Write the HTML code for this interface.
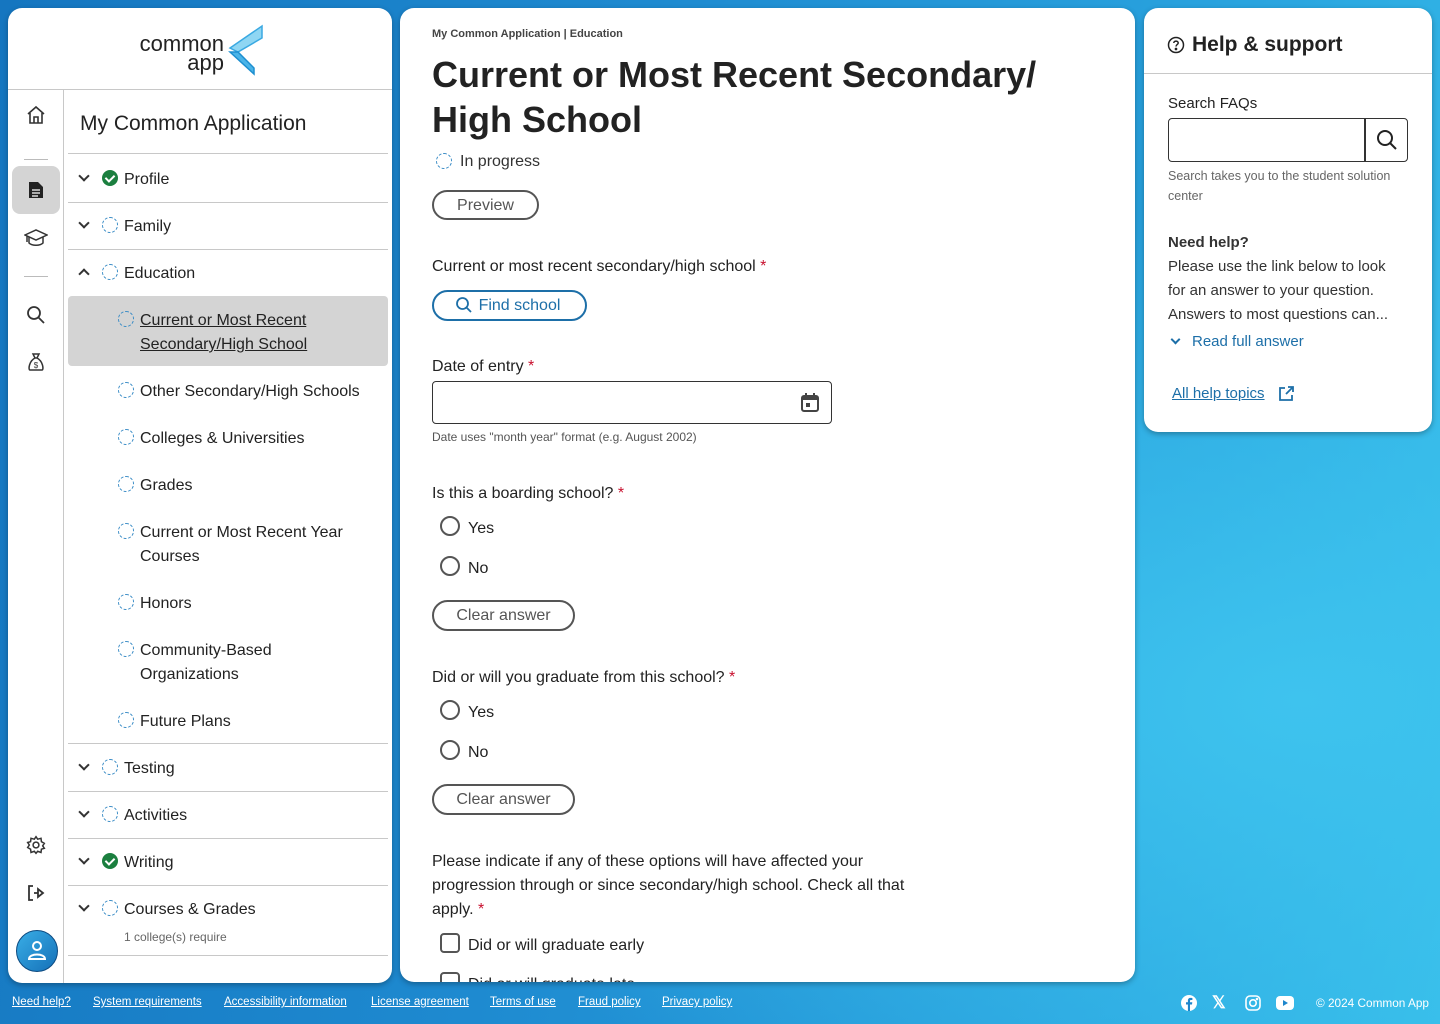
<!DOCTYPE html>
<html><head><meta charset="utf-8"><style>
*{box-sizing:border-box;margin:0;padding:0}
body{width:1440px;height:1024px;overflow:hidden;font-family:"Liberation Sans",sans-serif;color:#222;position:relative;
background:radial-gradient(ellipse 900px 500px at 1300px 700px,#3ec3ee 0%,rgba(62,195,238,0) 100%),linear-gradient(100deg,#1576c0 0%,#1e8ad0 40%,#2aa6e0 80%,#36bde9 100%);}
.a{position:absolute}
.panel{position:absolute;background:#fff;border-radius:14px;box-shadow:0 2px 6px rgba(0,0,0,.3);overflow:hidden}
.t{position:absolute;font-size:16px;line-height:24px;white-space:nowrap}
.sep{position:absolute;left:60px;width:320px;height:1px;background:#c8c8c8}
.dc{position:absolute;width:16px;height:16px;border:1.5px dashed #3a8cc6;border-radius:50%}
.ck{position:absolute;width:16px;height:16px;border-radius:50%;background:#1b7f3f}
.ck:after{content:"";position:absolute;left:5px;top:3px;width:4px;height:7px;border:solid #fff;border-width:0 2px 2px 0;transform:rotate(45deg)}
.chev{position:absolute;width:8px;height:8px;border:solid #333;border-width:0 2px 2px 0;transform:rotate(45deg)}
.chevu{position:absolute;width:8px;height:8px;border:solid #333;border-width:2px 0 0 2px;transform:rotate(45deg)}
.btn{position:absolute;border:2px solid #555;border-radius:20px;font-size:16px;color:#555;text-align:center;line-height:27px}
.radio{position:absolute;width:20px;height:20px;border:2px solid #555;border-radius:50%}
.req{color:#c8102e}
.foot{position:absolute;top:996px;font-size:11.5px;color:#fff;text-decoration:underline}
.nav .t{margin-top:2px}
</style></head><body>

<div class="panel nav" style="left:8px;top:8px;width:384px;height:975px">
  <div class="a" style="left:120px;top:26px;font-size:22px;line-height:19px;text-align:right;width:96px;color:#222">common<br>app</div>
  <svg class="a" style="left:218px;top:16px" width="40" height="52" viewBox="0 0 40 52"><path d="M36 2 L36 14 L12 28 L4 24 Z" fill="#8fd6f3" stroke="#3aa9e2" stroke-width="1.5"/><path d="M4 28 L12 28 L28 44 L28 50 Z" fill="#4ab4e8" stroke="#1d8fd0" stroke-width="1.5"/></svg>
  <div class="a" style="left:0;top:81px;width:384px;height:1px;background:#c8c8c8"></div>
  <div class="a" style="left:55px;top:82px;width:1px;height:900px;background:#c8c8c8"></div>
  <svg class="a" style="left:18px;top:97px" width="20" height="20" viewBox="0 0 20 20" fill="none" stroke="#333" stroke-width="1.6"><path d="M2 9 L10 2 L18 9 M4 8 V18 H16 V8 M8 18 V12 H12 V18"/></svg>
  <div class="a" style="left:16px;top:151px;width:24px;height:1px;background:#bbb"></div>
  <div class="a" style="left:4px;top:158px;width:48px;height:48px;border-radius:8px;background:#d4d4d4"></div>
  <svg class="a" style="left:20px;top:173px" width="16" height="18" viewBox="0 0 16 18"><path d="M1 1 H10 L15 6 V17 H1 Z" fill="#222"/><path d="M4 9H12M4 12H12M4 15H10" stroke="#fff" stroke-width="1.3"/></svg>
  <svg class="a" style="left:16px;top:220px" width="24" height="20" viewBox="0 0 24 20" fill="none" stroke="#333" stroke-width="1.5"><path d="M1 7 L12 2 L23 7 L12 12 Z M5 9 V15 C8 18 16 18 19 15 V9 M3 8 V14"/></svg>
  <div class="a" style="left:16px;top:268px;width:24px;height:1px;background:#bbb"></div>
  <svg class="a" style="left:18px;top:297px" width="20" height="20" viewBox="0 0 20 20" fill="none" stroke="#333" stroke-width="1.8"><circle cx="8" cy="8" r="6"/><path d="M12.5 12.5 L18 18"/></svg>
  <svg class="a" style="left:18px;top:344px" width="20" height="20" viewBox="0 0 20 20" fill="none" stroke="#333" stroke-width="1.5"><path d="M7 2 H13 L11 6 H9 Z M9 6 C3 9 2 18 4 18 H16 C18 18 17 9 11 6"/><text x="10" y="16" font-size="8" text-anchor="middle" fill="#333" stroke="none" font-family="Liberation Sans">$</text></svg>
  <svg class="a" style="left:18px;top:827px" width="20" height="20" viewBox="0 0 24 24" fill="none" stroke="#333" stroke-width="1.8"><circle cx="12" cy="12" r="3.5"/><path d="M12 2 L14 5 L18 4 L18.5 8 L22 10 L20 13 L22 16 L18.5 17 L18 21 L14 19.5 L12 22 L10 19.5 L6 21 L5.5 17 L2 15 L4 12 L2 9 L5.5 8 L6 4 L10 5 Z"/></svg>
  <svg class="a" style="left:18px;top:875px" width="20" height="20" viewBox="0 0 20 20" fill="none" stroke="#333" stroke-width="1.8"><path d="M7 3 H3 V17 H7 M8 10 H12 V6 L17 10 L12 14 V10"/></svg>
  <div class="a" style="left:8px;top:922px;width:42px;height:42px;border-radius:50%;background:linear-gradient(135deg,#39aee6,#1570b8);border:1.5px solid #0d4a80"></div>
  <svg class="a" style="left:17px;top:930px" width="24" height="24" viewBox="0 0 24 24" fill="none" stroke="#fff" stroke-width="2"><circle cx="12" cy="8" r="4"/><path d="M4 21 C4 15 20 15 20 21 Z"/></svg>

  <div class="t" style="left:72px;top:100px;font-size:21px;line-height:28px">My Common Application</div>
  <div class="sep" style="top:145px"></div>
  <div class="chev" style="left:72px;top:164px"></div><div class="ck" style="left:94px;top:162px"></div><div class="t" style="left:116px;top:158px">Profile</div>
  <div class="sep" style="top:194px"></div>
  <div class="chev" style="left:72px;top:211px"></div><div class="dc" style="left:94px;top:209px"></div><div class="t" style="left:116px;top:205px">Family</div>
  <div class="sep" style="top:241px"></div>
  <div class="chevu" style="left:72px;top:262px"></div><div class="dc" style="left:94px;top:256px"></div><div class="t" style="left:116px;top:252px">Education</div>
  <div class="a" style="left:60px;top:288px;width:320px;height:70px;background:#d4d4d4;border-radius:4px"></div>
  <div class="dc" style="left:110px;top:303px"></div><div class="t" style="left:132px;top:299px;text-decoration:underline">Current or Most Recent<br>Secondary/High School</div>
  <div class="dc" style="left:110px;top:374px"></div><div class="t" style="left:132px;top:370px">Other Secondary/High Schools</div>
  <div class="dc" style="left:110px;top:421px"></div><div class="t" style="left:132px;top:417px">Colleges &amp; Universities</div>
  <div class="dc" style="left:110px;top:468px"></div><div class="t" style="left:132px;top:464px">Grades</div>
  <div class="dc" style="left:110px;top:515px"></div><div class="t" style="left:132px;top:511px">Current or Most Recent Year<br>Courses</div>
  <div class="dc" style="left:110px;top:586px"></div><div class="t" style="left:132px;top:582px">Honors</div>
  <div class="dc" style="left:110px;top:633px"></div><div class="t" style="left:132px;top:629px">Community-Based<br>Organizations</div>
  <div class="dc" style="left:110px;top:704px"></div><div class="t" style="left:132px;top:700px">Future Plans</div>
  <div class="sep" style="top:735px"></div>
  <div class="chev" style="left:72px;top:753px"></div><div class="dc" style="left:94px;top:751px"></div><div class="t" style="left:116px;top:747px">Testing</div>
  <div class="sep" style="top:783px"></div>
  <div class="chev" style="left:72px;top:800px"></div><div class="dc" style="left:94px;top:798px"></div><div class="t" style="left:116px;top:794px">Activities</div>
  <div class="sep" style="top:830px"></div>
  <div class="chev" style="left:72px;top:847px"></div><div class="ck" style="left:94px;top:845px"></div><div class="t" style="left:116px;top:841px">Writing</div>
  <div class="sep" style="top:877px"></div>
  <div class="chev" style="left:72px;top:894px"></div><div class="dc" style="left:94px;top:892px"></div><div class="t" style="left:116px;top:888px">Courses &amp; Grades</div>
  <div class="t" style="left:116px;top:915px;font-size:12px;color:#666">1 college(s) require</div>
  <div class="sep" style="top:947px"></div>
</div>

<div class="panel" style="left:400px;top:8px;width:735px;height:974px">
  <div class="t" style="left:32px;top:18px;font-size:11px;line-height:16px;color:#444;font-weight:bold">My Common Application | Education</div>
  <div class="a" style="left:32px;top:44px;font-size:36px;line-height:45px;font-weight:bold;color:#222;width:680px">Current or Most Recent Secondary/<br>High School</div>
  <div class="dc" style="left:36px;top:145px"></div><div class="t" style="left:60px;top:142px;color:#333">In progress</div>
  <div class="btn" style="left:32px;top:182px;width:107px;height:30px">Preview</div>
  <div class="t" style="left:32px;top:247px">Current or most recent secondary/high school <span class="req">*</span></div>
  <div class="btn" style="left:32px;top:282px;width:155px;height:31px;border-color:#1d6fa8;color:#1d6fa8;padding-left:20px">Find school</div>
  <svg class="a" style="left:55px;top:288px" width="18" height="18" viewBox="0 0 18 18" fill="none" stroke="#1d6fa8" stroke-width="1.8"><circle cx="7.5" cy="7.5" r="5.5"/><path d="M11.5 11.5 L16 16"/></svg>
  <div class="t" style="left:32px;top:347px">Date of entry <span class="req">*</span></div>
  <div class="a" style="left:32px;top:373px;width:400px;height:43px;border:1.5px solid #333;border-radius:4px"></div>
  <svg class="a" style="left:400px;top:384px" width="20" height="21" viewBox="0 0 20 21"><rect x="2" y="4" width="16" height="15" rx="2" fill="none" stroke="#444" stroke-width="2"/><rect x="2" y="4" width="16" height="4" fill="#444"/><path d="M6 1V5M14 1V5" stroke="#444" stroke-width="2"/><rect x="6" y="11" width="4" height="4" fill="#444"/></svg>
  <div class="t" style="left:32px;top:421px;font-size:12px;line-height:16px;color:#555">Date uses "month year" format (e.g. August 2002)</div>
  <div class="t" style="left:32px;top:474px">Is this a boarding school? <span class="req">*</span></div>
  <div class="radio" style="left:40px;top:508px"></div><div class="t" style="left:68px;top:509px">Yes</div>
  <div class="radio" style="left:40px;top:548px"></div><div class="t" style="left:68px;top:549px">No</div>
  <div class="btn" style="left:32px;top:592px;width:143px;height:31px">Clear answer</div>
  <div class="t" style="left:32px;top:658px">Did or will you graduate from this school? <span class="req">*</span></div>
  <div class="radio" style="left:40px;top:692px"></div><div class="t" style="left:68px;top:693px">Yes</div>
  <div class="radio" style="left:40px;top:732px"></div><div class="t" style="left:68px;top:733px">No</div>
  <div class="btn" style="left:32px;top:776px;width:143px;height:31px">Clear answer</div>
  <div class="t" style="left:32px;top:842px">Please indicate if any of these options will have affected your<br>progression through or since secondary/high school. Check all that<br>apply. <span class="req">*</span></div>
  <div class="a" style="left:40px;top:925px;width:20px;height:20px;border:2px solid #555;border-radius:4px"></div><div class="t" style="left:68px;top:926px">Did or will graduate early</div>
  <div class="a" style="left:40px;top:964px;width:20px;height:20px;border:2px solid #555;border-radius:4px"></div><div class="t" style="left:68px;top:965px">Did or will graduate late</div>
</div>

<div class="panel" style="left:1144px;top:8px;width:288px;height:424px">
  <svg class="a" style="left:23px;top:28px" width="18" height="18" viewBox="0 0 18 18" fill="none" stroke="#222" stroke-width="1.5"><circle cx="9" cy="9" r="7.5"/><path d="M6.8 7 C6.8 4.5 11.2 4.5 11.2 7 C11.2 8.6 9 8.6 9 10.5"/><circle cx="9" cy="13" r=".6" fill="#222"/></svg>
  <div class="t" style="left:48px;top:24px;font-size:21px;line-height:26px;font-weight:bold">Help &amp; support</div>
  <div class="a" style="left:0;top:65px;width:288px;height:1px;background:#c8c8c8"></div>
  <div class="t" style="left:24px;top:84px;font-size:15px">Search FAQs</div>
  <div class="a" style="left:24px;top:110px;width:240px;height:44px;border:1.5px solid #333;border-radius:4px"></div>
  <div class="a" style="left:220px;top:110px;width:1.5px;height:44px;background:#333"></div>
  <svg class="a" style="left:232px;top:121px" width="22" height="22" viewBox="0 0 22 22" fill="none" stroke="#222" stroke-width="2"><circle cx="9" cy="9" r="7"/><path d="M14 14 L20 20"/></svg>
  <div class="t" style="left:24px;top:158px;font-size:12.5px;line-height:20px;color:#666;white-space:normal;width:250px">Search takes you to the student solution center</div>
  <div class="t" style="left:24px;top:223px;font-size:15px;font-weight:bold;color:#333">Need help?</div>
  <div class="t" style="left:24px;top:247px;font-size:15px;color:#333">Please use the link below to look<br>for an answer to your question.<br>Answers to most questions can...</div>
  <div class="chev" style="left:28px;top:328px;border-color:#1d6fa8;width:7px;height:7px"></div>
  <div class="t" style="left:48px;top:322px;font-size:15px;color:#1d6fa8">Read full answer</div>
  <div class="t" style="left:28px;top:374px;font-size:15px;color:#1d6fa8;text-decoration:underline">All help topics</div>
  <svg class="a" style="left:134px;top:377px" width="17" height="17" viewBox="0 0 17 17" fill="none" stroke="#1d6fa8" stroke-width="1.8"><path d="M7 3 H2 V15 H14 V10 M10 2 H15 V7 M15 2 L8 9"/></svg>
</div>

<div class="foot" style="left:12px">Need help?</div>
<div class="foot" style="left:93px">System requirements</div>
<div class="foot" style="left:224px">Accessibility information</div>
<div class="foot" style="left:371px">License agreement</div>
<div class="foot" style="left:490px">Terms of use</div>
<div class="foot" style="left:578px">Fraud policy</div>
<div class="foot" style="left:662px">Privacy policy</div>
<svg class="a" style="left:1181px;top:995px" width="16" height="16" viewBox="0 0 16 16"><circle cx="8" cy="8" r="8" fill="#fff"/><path d="M9 16 V9.5 H11 L11.3 7.3 H9 V6 C9 5.3 9.3 5 10 5 H11.4 V3 C11 3 10.3 2.9 9.6 2.9 C7.9 2.9 6.9 3.9 6.9 5.7 V7.3 H5 V9.5 H6.9 V16 Z" fill="#1d86cc"/></svg>
<div class="a" style="left:1212px;top:993px;color:#fff;font-size:17px;line-height:20px;font-weight:bold">𝕏</div>
<svg class="a" style="left:1245px;top:995px" width="16" height="16" viewBox="0 0 16 16" fill="none" stroke="#fff" stroke-width="1.6"><rect x="1" y="1" width="14" height="14" rx="4"/><circle cx="8" cy="8" r="3.2"/><circle cx="12" cy="4" r=".5" fill="#fff"/></svg>
<svg class="a" style="left:1276px;top:996px" width="18" height="14" viewBox="0 0 18 14"><rect x="0" y="0" width="18" height="14" rx="4" fill="#fff"/><path d="M7 4 L12 7 L7 10 Z" fill="#1d86cc"/></svg>
<div class="a" style="left:1316px;top:996px;font-size:11.8px;color:#fff">© 2024 Common App</div>
</body></html>
